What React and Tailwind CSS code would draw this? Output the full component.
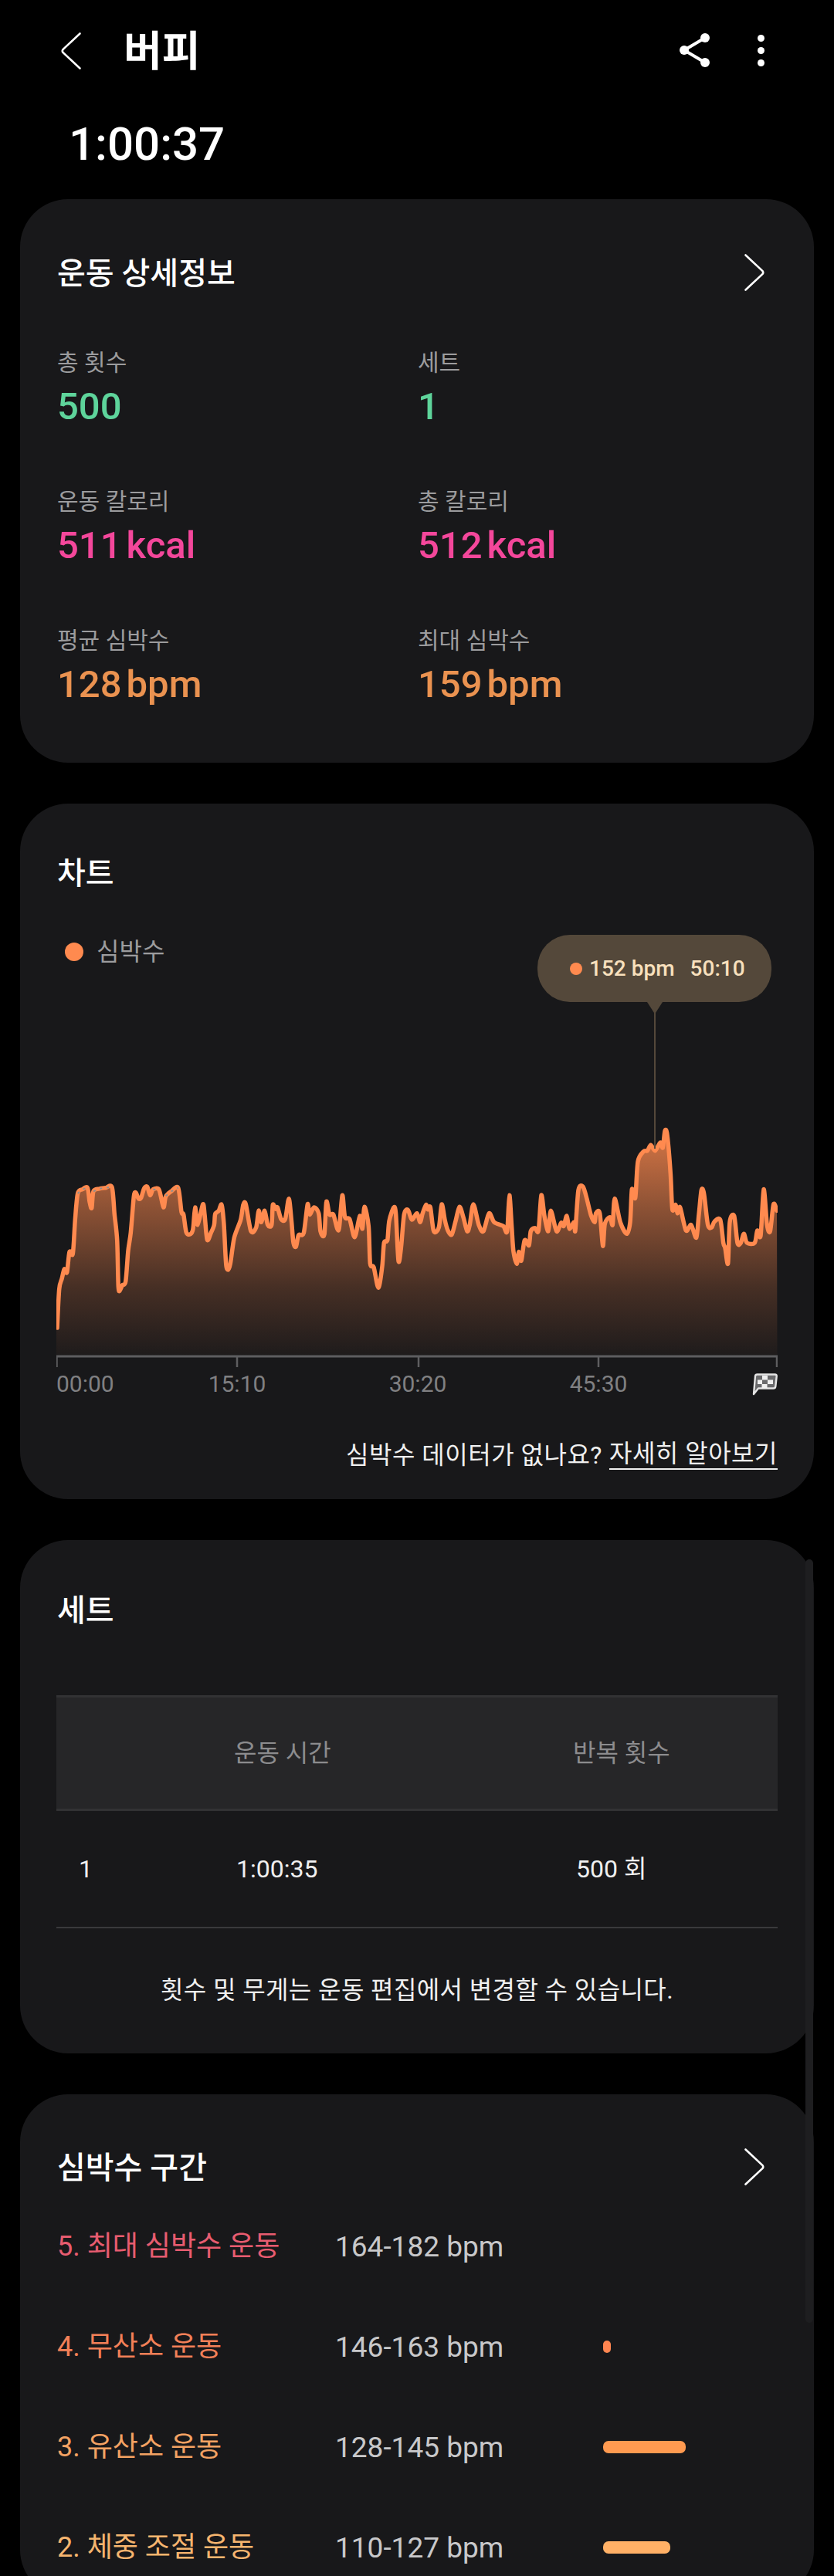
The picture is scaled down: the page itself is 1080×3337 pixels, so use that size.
// traced from the chart, in crop pixels (3x, left part starts at x=40, right part at x=540, y at 1440)
const leftTrace = [
  [102,840],[110,690],[120,650],[130,612],[140,625],[150,545],[163,552],[172,420],[182,318],[200,302],[220,296],[228,350],[236,375],[243,310],[265,300],[290,296],[315,294],[325,400],[335,500],[340,680],[346,695],[355,675],[368,660],[378,540],[388,470],[400,330],[408,315],[418,338],[428,335],[440,298],[452,292],[463,325],[475,302],[498,304],[515,372],[524,330],[545,310],[572,296],[585,390],[593,400],[604,470],[620,476],[630,455],[638,372],[648,440],[668,360],[675,400],[685,498],[700,470],[712,440],[716,398],[730,385],[741,362],[750,440],[758,590],[766,615],[775,590],[790,490],[815,420],[825,362],[835,360],[855,465],[875,450],[885,385],[895,430],[908,385],[920,440],[935,440],[940,362],[950,378],[958,372],[972,418],[988,418],[1002,338],[1012,420],[1020,510],[1030,525],[1040,480],[1060,472],[1075,360],[1083,400],[1100,372],[1118,395],[1125,465],[1140,478],[1148,350],[1160,400],[1175,400],[1190,455],[1198,450],[1210,325],[1220,410],[1238,418],[1258,488],[1278,405],[1288,455],[1296,370],[1312,445],[1318,590],[1332,605],[1350,685],[1365,600],[1372,510],[1385,500],[1392,425],[1410,372],[1418,400],[1428,580],[1438,530],[1450,400],[1465,382],[1480,420],
];
const rightTrace = [
  [0,395],[12,430],[22,395],[35,362],[42,380],[52,372],[65,465],[85,450],[96,360],[108,420],[120,462],[135,478],[150,425],[165,370],[180,410],[195,465],[205,440],[219,360],[240,440],[258,465],[280,395],[300,430],[335,445],[350,465],[359,325],[368,450],[375,545],[388,592],[395,545],[405,580],[418,500],[435,520],[442,465],[458,452],[472,462],[483,325],[495,405],[510,465],[520,385],[542,465],[560,432],[570,445],[582,405],[592,455],[610,430],[615,462],[627,305],[645,292],[660,340],[675,400],[690,430],[695,395],[710,395],[722,522],[730,435],[750,410],[760,440],[768,338],[790,430],[815,475],[828,430],[835,302],[848,335],[858,195],[880,155],[895,152],[908,130],[925,152],[945,120],[955,140],[963,75],[972,90],[985,240],[992,380],[1005,362],[1012,395],[1022,372],[1045,462],[1065,440],[1085,490],[1095,400],[1105,305],[1115,320],[1130,440],[1145,450],[1155,428],[1178,420],[1190,510],[1197,530],[1208,590],[1215,430],[1232,405],[1245,510],[1258,510],[1270,475],[1282,510],[1312,510],[1322,462],[1335,482],[1347,302],[1360,440],[1372,465],[1385,360],[1398,385],
];

const toPage = (offset) => ([x, y]) => [offset + x / 3, 1440 + y / 3];
const points = [...leftTrace.map(toPage(40)), ...rightTrace.map(toPage(540))];

function smoothPath(pts) {
  let d = `M${pts[0][0].toFixed(1)} ${pts[0][1].toFixed(1)}`;
  for (let i = 0; i < pts.length - 1; i++) {
    const p0 = pts[Math.max(i - 1, 0)];
    const p1 = pts[i];
    const p2 = pts[i + 1];
    const p3 = pts[Math.min(i + 2, pts.length - 1)];
    const c1x = p1[0] + (p2[0] - p0[0]) / 7;
    const c1y = p1[1] + (p2[1] - p0[1]) / 7;
    const c2x = p2[0] - (p3[0] - p1[0]) / 7;
    const c2y = p2[1] - (p3[1] - p1[1]) / 7;
    d += `C${c1x.toFixed(1)} ${c1y.toFixed(1)} ${c2x.toFixed(1)} ${c2y.toFixed(1)} ${p2[0].toFixed(1)} ${p2[1].toFixed(1)}`;
  }
  return d;
}

const linePath = smoothPath(points);
const areaPath = `${linePath}L1006.5 1755L73 1755L73 ${points[0][1].toFixed(1)}Z`;

// grey dotted stretches on top of the line (no sensor data)
const gaps = [
  [[182,318],[200,302],[220,296]],
  [[243,310],[265,300],[290,296],[315,294]],
  [[475,302],[498,304]],
  [[524,328],[545,310],[572,296]],
].map((g) => g.map(toPage(40)).map((p) => p.join(',')).join(' '));

const ticks = [73.5, 307, 542, 775, 1006];

const stats = [
  { label: '총 횟수', value: '500', color: 'text-[#5ed49b]' },
  { label: '세트', value: '1', color: 'text-[#5ed49b]' },
  { label: '운동 칼로리', value: '511', unit: 'kcal', color: 'text-[#f4479b]' },
  { label: '총 칼로리', value: '512', unit: 'kcal', color: 'text-[#f4479b]' },
  { label: '평균 심박수', value: '128', unit: 'bpm', color: 'text-[#ea9250]' },
  { label: '최대 심박수', value: '159', unit: 'bpm', color: 'text-[#ea9250]' },
];

const zones = [
  { name: '5. 최대 심박수 운동', range: '164-182 bpm', color: 'text-[#e85c70]' },
  { name: '4. 무산소 운동', range: '146-163 bpm', color: 'text-[#f28058]', bar: 'w-[10px] bg-[#ff8550]' },
  { name: '3. 유산소 운동', range: '128-145 bpm', color: 'text-[#f3a263]', bar: 'w-[107px] bg-[#ff9a50]' },
  { name: '2. 체중 조절 운동', range: '110-127 bpm', color: 'text-[#f6b56f]', bar: 'w-[87px] bg-[#ffb066]' },
];

function Chevron({ flip, className }) {
  return (
    <svg width="28" height="50" viewBox="0 0 28 50" className={`text-white ${flip ? '-scale-x-100' : ''} ${className}`}>
      <path d="M2.5 2.5L24.5 23Q26 25 24.5 27L2.5 47.5" fill="none" stroke="currentColor" strokeWidth="2.6" strokeLinecap="round" />
    </svg>
  );
}

function CardTitle({ children, arrow, className }) {
  return (
    <div className={`flex h-[64px] items-center justify-between ${className}`}>
      <h2 className="text-[40px] font-medium text-white leading-none">{children}</h2>
      {arrow && <Chevron className="mb-[4px] mr-[15px]" />}
    </div>
  );
}

function FinishFlag() {
  return (
    <svg width="33" height="29" viewBox="0 0 33 29" className="ml-auto">
      <path d="M4 3.5Q4.3 1.5 6.5 1.5H29.5Q32 1.5 31.7 4L30.3 17Q30 19.5 27.5 19.5H8L2 27Z" fill="#6a6a6c" stroke="#e4e4e4" strokeWidth="2.4" strokeLinejoin="round" />
      <rect x="13" y="3" width="7" height="5.5" fill="#f0f0f0" />
      <rect x="7" y="8.5" width="6" height="5.5" fill="#f0f0f0" />
      <rect x="20" y="8.5" width="7" height="5.5" fill="#f0f0f0" />
      <rect x="12.5" y="14" width="7" height="5" fill="#f0f0f0" />
    </svg>
  );
}

export default function App() {
  return (
    <div className="relative h-[3337px] w-[1080px] overflow-hidden bg-black font-[Roboto,'Noto_Sans_CJK_KR',sans-serif]">
      {/* header */}
      <header className="flex h-[136px] items-center pl-[78px] pr-[90px]">
        <Chevron flip className="mb-[5px]" />
        <h1 className="ml-[54px] text-[54px] font-bold leading-none text-white">버피</h1>
        <div className="mb-[6px] ml-auto flex items-center">
          <svg width="44" height="48" viewBox="0 0 44 48" className="text-white">
            <path d="M33 8L6 24L33 40" fill="none" stroke="currentColor" strokeWidth="4" />
            <circle cx="33" cy="8" r="6" fill="currentColor" />
            <circle cx="6" cy="24" r="6" fill="currentColor" />
            <circle cx="33" cy="40" r="6" fill="currentColor" />
          </svg>
          <div className="ml-[57px] flex flex-col gap-[7px]">
            <span className="h-[9px] w-[9px] rounded-full bg-white" />
            <span className="h-[9px] w-[9px] rounded-full bg-white" />
            <span className="h-[9px] w-[9px] rounded-full bg-white" />
          </div>
        </div>
      </header>
      <div className="flex h-[122px] items-start pl-[89px] pt-[17px] text-[60px] font-medium leading-[68px] text-white">1:00:37</div>

      <main className="flex flex-col gap-[53px] px-[26px]">
        {/* workout details */}
        <section className="rounded-[62px] bg-[#18181a] px-[48px]">
          <CardTitle arrow className="mt-[65px]">운동 상세정보</CardTitle>
          <div className="mt-[61px] grid grid-cols-[467px_1fr]">
            {stats.map((s) => (
              <div key={s.label} className="h-[180px]">
                <div className="flex h-[44px] items-center text-[30px] leading-none text-[#9c9c9e]">{s.label}</div>
                <div className={`flex h-[68px] items-center text-[49px] font-medium leading-none ${s.color}`}>
                  {s.value}
                  {s.unit && <span className="ml-[6px]">{s.unit}</span>}
                </div>
              </div>
            ))}
          </div>
        </section>

        {/* chart */}
        <section className="relative rounded-[62px] bg-[#18181a] px-[47px] pb-[33px]">
          <CardTitle className="mt-[59px] pl-px">차트</CardTitle>
          <div className="mt-[45px] flex h-[48px] items-center">
            <span className="ml-[11px] h-[24px] w-[24px] rounded-full bg-[#ff8a4f]" />
            <span className="ml-[17px] text-[32px] leading-none text-[#9c9c9e]">심박수</span>
          </div>

          {/* tooltip above the chart */}
          <div className="absolute left-[670px] top-[170px] z-10 flex w-[303px] flex-col items-center">
            <div className="flex h-[87px] w-full items-center rounded-[42px] bg-[#54483a] pl-[42px] text-[28px] font-medium leading-none text-[#f8e0bd]">
              <span className="h-[16px] w-[16px] rounded-full bg-[#ff8a4f]" />
              <span className="ml-[9px]">152 bpm</span>
              <span className="ml-[20px]">50:10</span>
            </div>
            <svg width="20" height="14" viewBox="0 0 20 14" className="block">
              <path d="M0 0H20L11 14H9Z" fill="#54483a" />
            </svg>
            <div className="h-[176px] w-[2px] bg-[#54483a]" />
          </div>

          <svg width="934" height="331" viewBox="73 1440 934 331" className="mt-[183px] block">
            <defs>
              <linearGradient id="hrFill" gradientUnits="userSpaceOnUse" x1="0" y1="1465" x2="0" y2="1755">
                <stop offset="0" stopColor="#ff8a4f" stopOpacity="0.82" />
                <stop offset="0.35" stopColor="#ff8a4f" stopOpacity="0.5" />
                <stop offset="0.7" stopColor="#ff8a4f" stopOpacity="0.2" />
                <stop offset="1" stopColor="#ff8a4f" stopOpacity="0.03" />
              </linearGradient>
            </defs>
            <path d={areaPath} fill="url(#hrFill)" />
            <path d={linePath} fill="none" stroke="#ff8a4f" strokeWidth="5.5" strokeLinejoin="round" strokeLinecap="round" />
            {gaps.map((g) => (
              <polyline key={g} points={g} fill="none" stroke="#8f8f8f" strokeWidth="2" strokeDasharray="3 6" />
            ))}
            <path d="M73 1757H1007" stroke="#5e5e60" strokeWidth="3" />
            {ticks.map((x) => (
              <path key={x} d={`M${x} 1756V1771`} stroke="#5e5e60" strokeWidth="2.5" />
            ))}
          </svg>

          <div className="grid h-[44px] grid-cols-[117px_234px_234px_234px_1fr] items-center text-[30px] leading-none text-[#808082]">
            <span>00:00</span>
            <span className="text-center">15:10</span>
            <span className="text-center">30:20</span>
            <span className="text-center">45:30</span>
            <FinishFlag />
          </div>

          <p className="mt-[46px] flex h-[48px] items-center justify-end text-[32px] leading-none text-[#f0f0f0]">
            <span className="tracking-[0.5px]">심박수 데이터가 없나요?</span>
            <span className="ml-[9px] border-b-2 border-[#f0f0f0] pb-[3px] tracking-[0.5px]">자세히 알아보기</span>
          </p>
        </section>

        {/* sets */}
        <section className="rounded-[62px] bg-[#18181a] px-[47px] pb-[58px]">
          <CardTitle className="mt-[60px] pl-px">세트</CardTitle>
          <div className="mt-[77px] grid h-[150px] grid-cols-[230px_439px_1fr] items-center border-y-[3px] border-[#323234] bg-[#262628] text-[32px] leading-none text-[#8c8c8e]">
            <span />
            <span>운동 시간</span>
            <span>반복 횟수</span>
          </div>
          <div className="grid h-[152px] grid-cols-[230px_439px_1fr] items-center border-b-2 border-[#3a3a3c] text-[32px] leading-none text-[#f0f0f0]">
            <span className="pl-[29px]">1</span>
            <span className="pl-[3px]">1:00:35</span>
            <span className="pl-[4px]">500 회</span>
          </div>
          <p className="mt-[56px] text-center text-[32px] leading-[48px] tracking-[0.4px] text-[#f0f0f0]">
            횟수 및 무게는 운동 편집에서 변경할 수 있습니다.
          </p>
        </section>

        {/* heart rate zones */}
        <section className="rounded-[62px] bg-[#18181a] px-[48px]">
          <CardTitle arrow className="mt-[64px]">심박수 구간</CardTitle>
          <div className="mt-[4px]">
            {zones.map((z) => (
              <div key={z.name} className="grid h-[130px] grid-cols-[360px_347px_1fr] items-center text-[36px] leading-none">
                <span className={z.color}>{z.name}</span>
                <span className="text-[37px] text-[#c8c8ca]">{z.range}</span>
                {z.bar && <span className={`h-[16px] rounded-[7px] ${z.bar}`} />}
              </div>
            ))}
          </div>
        </section>
      </main>

      {/* scrollbar overlay */}
      <div className="absolute left-[1043px] top-[2020px] h-[989px] w-[10px] rounded-full bg-[#1e1e20]" />
    </div>
  );
}
